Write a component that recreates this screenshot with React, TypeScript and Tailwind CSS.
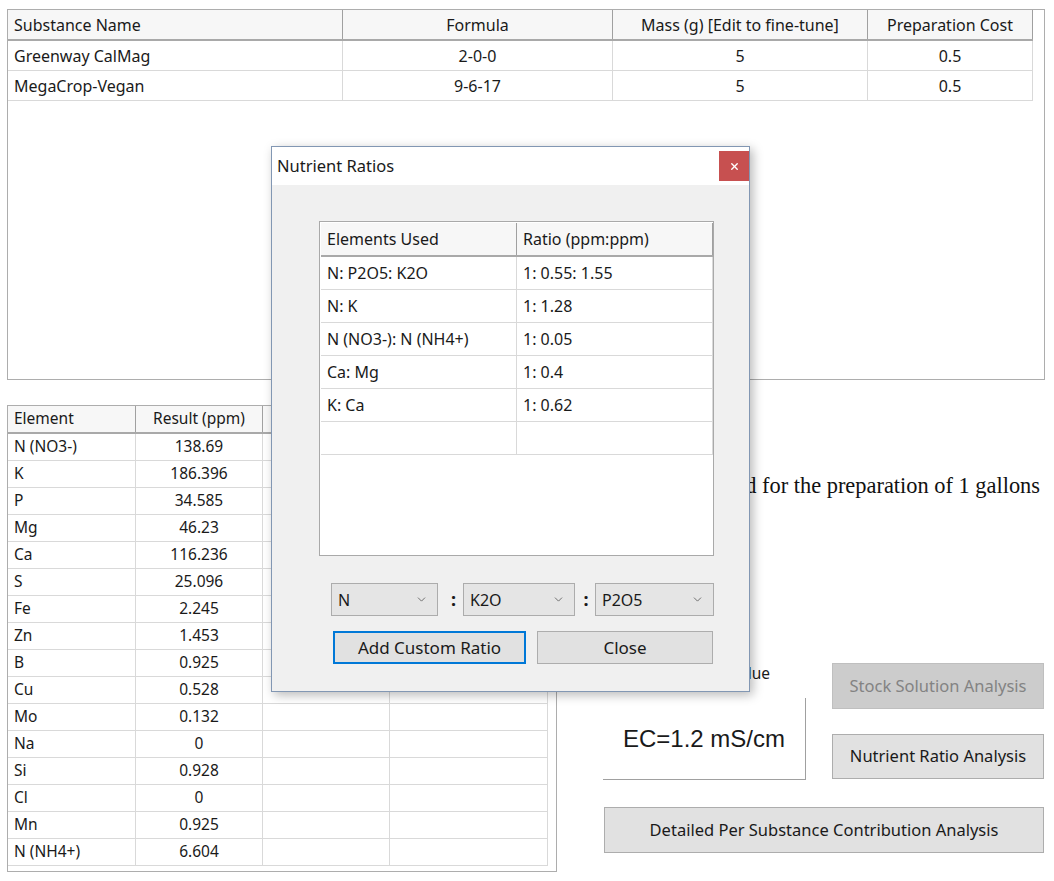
import { ChevronDown, X } from "lucide-react";

const substances = [
  { name: "Greenway CalMag", formula: "2-0-0", mass: "5", cost: "0.5" },
  { name: "MegaCrop-Vegan", formula: "9-6-17", mass: "5", cost: "0.5" },
];

const results = [
  ["N (NO3-)", "138.69"],
  ["K", "186.396"],
  ["P", "34.585"],
  ["Mg", "46.23"],
  ["Ca", "116.236"],
  ["S", "25.096"],
  ["Fe", "2.245"],
  ["Zn", "1.453"],
  ["B", "0.925"],
  ["Cu", "0.528"],
  ["Mo", "0.132"],
  ["Na", "0"],
  ["Si", "0.928"],
  ["Cl", "0"],
  ["Mn", "0.925"],
  ["N (NH4+)", "6.604"],
];

const ratios = [
  ["N: P2O5: K2O", "1: 0.55: 1.55"],
  ["N: K", "1: 1.28"],
  ["N (NO3-): N (NH4+)", "1: 0.05"],
  ["Ca: Mg", "1: 0.4"],
  ["K: Ca", "1: 0.62"],
  ["", ""],
];

function SubstanceTable() {
  return (
    <div className="ml-[7px] mt-[9px] h-[371px] w-[1038px] border border-[#adadad] bg-white text-[16px] text-[#1a1a1a]">
      <div className="flex h-[31px] w-[1025px] border-b-2 border-[#a9a9a9] bg-[#f7f7f7]">
        <div className="flex w-[335px] items-center border-r border-[#a0a0a0] pl-[6px]">Substance Name</div>
        <div className="flex w-[270px] items-center justify-center border-r border-[#a0a0a0]">Formula</div>
        <div className="flex w-[255px] items-center justify-center border-r border-[#a0a0a0]">Mass (g) [Edit to fine-tune]</div>
        <div className="flex w-[165px] items-center justify-center border-r border-[#a0a0a0]">Preparation Cost</div>
      </div>
      {substances.map((s) => (
        <div key={s.name} className="flex h-[30px] w-[1025px] border-b border-[#d9d9d9]">
          <div className="flex w-[335px] items-center border-r border-[#d9d9d9] pl-[6px]">{s.name}</div>
          <div className="flex w-[270px] items-center justify-center border-r border-[#d9d9d9]">{s.formula}</div>
          <div className="flex w-[255px] items-center justify-center border-r border-[#d9d9d9]">{s.mass}</div>
          <div className="flex w-[165px] items-center justify-center border-r border-[#d9d9d9]">{s.cost}</div>
        </div>
      ))}
    </div>
  );
}

function ResultTable() {
  return (
    <div className="ml-[7px] h-[467px] w-[550px] border border-[#adadad] bg-white text-[15.5px] text-[#1a1a1a]">
      <div className="flex h-[28px] w-[540px] border-b-2 border-[#a9a9a9] bg-[#f7f7f7]">
        <div className="flex w-[128px] items-center border-r border-[#a0a0a0] pl-[6px]">Element</div>
        <div className="flex w-[127px] items-center justify-center border-r border-[#a0a0a0]">Result (ppm)</div>
        <div className="w-[127px] border-r border-[#a0a0a0]" />
        <div className="w-[158px] border-r border-[#a0a0a0]" />
      </div>
      {results.map(([el, val]) => (
        <div key={el} className="flex h-[27px] w-[540px] border-b border-[#d9d9d9]">
          <div className="flex w-[128px] items-center border-r border-[#d9d9d9] pl-[6px]">{el}</div>
          <div className="flex w-[127px] items-center justify-center border-r border-[#d9d9d9]">{val}</div>
          <div className="w-[127px] border-r border-[#d9d9d9]" />
          <div className="w-[158px] border-r border-[#d9d9d9]" />
        </div>
      ))}
    </div>
  );
}

function Combo({ value, width }: { value: string; width: string }) {
  return (
    <div className={`flex h-[33px] items-center justify-between border border-[#acacac] bg-[#e5e5e5] pl-[6px] pr-[9px] ${width}`}>
      <span>{value}</span>
      <ChevronDown className="h-[13px] w-[13px] text-[#555]" strokeWidth={1.5} />
    </div>
  );
}

function RatioDialog() {
  return (
    <div className="absolute left-[271px] top-[146px] flex h-[546px] w-[479px] flex-col border border-[#8297b3] bg-[#f0f0f0] text-[16px] text-[#1a1a1a] shadow-[3px_3px_10px_rgba(0,0,0,0.28)]">
      <div className="flex h-[38px] items-start justify-between bg-white">
        <span className="pl-[5px] pt-[8px] text-[16.5px] leading-[22px]">Nutrient Ratios</span>
        <button type="button" className="mt-[4px] flex h-[30px] w-[30px] items-center justify-center bg-[#c75050]">
          <X className="h-[11px] w-[11px] text-white" strokeWidth={3} />
        </button>
      </div>

      <div className="ml-[47px] mt-[36px] h-[335px] w-[395px] border border-[#a9a9a9] bg-white p-px">
        <div className="flex h-[34px] w-[392px] border-b-2 border-[#a9a9a9] bg-[#f7f7f7]">
          <div className="flex w-[196px] items-center border-r border-[#a0a0a0] pl-[6px]">Elements Used</div>
          <div className="flex w-[196px] items-center border-r border-[#a0a0a0] pl-[6px]">Ratio (ppm:ppm)</div>
        </div>
        {ratios.map(([a, b], i) => (
          <div key={i} className="flex h-[33px] w-[392px] border-b border-[#d9d9d9]">
            <div className="flex w-[196px] items-center border-r border-[#d9d9d9] pl-[6px]">{a}</div>
            <div className="flex w-[196px] items-center border-r border-[#d9d9d9] pl-[6px]">{b}</div>
          </div>
        ))}
      </div>

      <div className="ml-[59px] mt-[27px] flex items-center">
        <Combo value="N" width="w-[107px]" />
        <span className="flex w-[25px] justify-center pl-[6px] text-[18px] font-bold">:</span>
        <Combo value="K2O" width="w-[112px]" />
        <span className="flex w-[20px] justify-center pl-[2px] text-[18px] font-bold">:</span>
        <Combo value="P2O5" width="w-[119px]" />
      </div>

      <div className="ml-[61px] mt-[15px] flex gap-[11px] text-[17px]">
        <button type="button" className="h-[33px] w-[193px] border-2 border-[#0078d7] bg-[#e1e1e1]">
          Add Custom Ratio
        </button>
        <button type="button" className="h-[33px] w-[176px] border border-[#adadad] bg-[#e1e1e1]">
          Close
        </button>
      </div>
    </div>
  );
}

export default function App() {
  return (
    <div className="relative h-[881px] w-[1054px] overflow-hidden bg-white font-['Noto_Sans',sans-serif]">
      <SubstanceTable />

      <div className="mt-[25px] flex items-start">
        <ResultTable />

        <div className="flex w-[497px] flex-col pl-[46px] pr-[10px]">
          <div className="mt-[66px] flex h-[30px] justify-end whitespace-nowrap pr-[4px] font-['Liberation_Serif',serif] text-[22.4px] leading-[30px] text-[#111]">
            Results calculated for the preparation of 1 gallons
          </div>

          <div className="mt-[162px] flex gap-[26px]">
            <div className="flex w-[203px] flex-col">
              <div className="h-[20px] pr-[36px] text-right text-[15.5px] leading-[20px] text-[#1a1a1a]">Estimated EC Value</div>
              <div className="mt-[15px] flex h-[82px] items-center justify-center border-b border-r border-[#a0a0a0] font-['Liberation_Sans',sans-serif] text-[24px] text-[#1a1a1a]">
                EC=1.2 mS/cm
              </div>
            </div>
            <div className="flex w-[212px] flex-col text-[16.5px]">
              <button type="button" disabled className="h-[46px] border border-[#bfbfbf] bg-[#cccccc] text-[#838383]">
                Stock Solution Analysis
              </button>
              <button type="button" className="mt-[25px] h-[45px] border border-[#adadad] bg-[#e1e1e1] text-[#1a1a1a]">
                Nutrient Ratio Analysis
              </button>
            </div>
          </div>

          <button type="button" className="ml-px mt-[27px] h-[46px] w-[440px] border border-[#adadad] bg-[#e1e1e1] text-[16.5px] text-[#1a1a1a]">
            Detailed Per Substance Contribution Analysis
          </button>
        </div>
      </div>

      <RatioDialog />
    </div>
  );
}
